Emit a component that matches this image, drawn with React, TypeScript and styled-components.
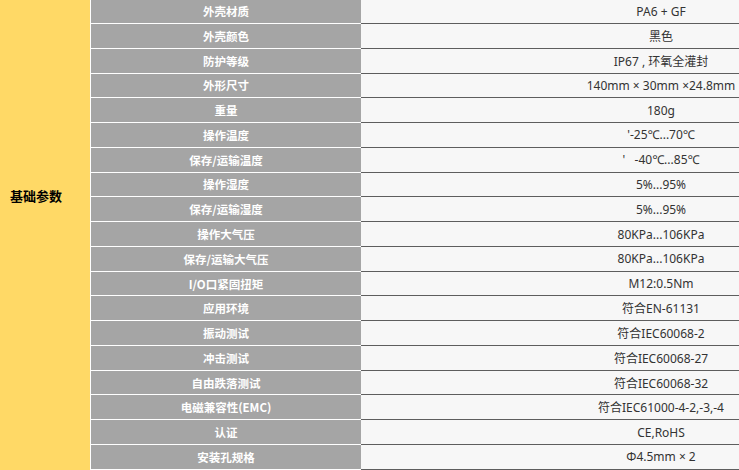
import React, { ReactElement } from "react";
import styled, { createGlobalStyle } from "styled-components";

const GlobalStyle = createGlobalStyle`
  html, body {
    margin: 0;
    padding: 0;
    background-color: #ffffff;
    overflow: hidden;
  }
`;

const color = {
  yellow: "#ffd966",
  gray: "#a5a5a5",
  cell: "#f7f7f7",
  line: "#5e5e5e",
  text: "#333333",
};

const Wrapper = styled.div`
  display: flex;
  width: 961px;
  margin-top: -1.78px;

  font-family: "Noto Sans CJK SC", "Noto Sans", sans-serif;
`;

const GroupCell = styled.div`
  width: 91px;
  flex-shrink: 0;
  box-sizing: border-box;
  padding: 188px 0 0 10px;

  border-right: 1px solid #ffffff;
  background-color: ${color.yellow};

  color: #000000;
  font-size: 13px;
  font-weight: 700;
  line-height: 20px;
`;

const Rows = styled.div`
  display: flex;
  flex-direction: column;
  flex: 1;
`;

const Row = styled.div`
  display: grid;
  grid-template-columns: 270px 1fr;
  height: 24.78px;
`;

const Label = styled.div`
  display: flex;
  align-items: center;
  justify-content: center;

  box-sizing: border-box;
  border-top: 1px solid #ffffff;
  background-color: ${color.gray};

  color: #ffffff;
  font-size: 11.5px;
  font-weight: 700;
  white-space: nowrap;
`;

const Value = styled.div`
  display: flex;
  align-items: center;
  justify-content: center;

  box-sizing: border-box;
  border-top: 1px solid ${color.line};
  background-color: ${color.cell};

  color: ${color.text};
  font-family: "Noto Sans", "Noto Sans CJK SC", sans-serif;
  font-size: 12px;
  white-space: pre;
`;

const specs: [string, string][] = [
  ["外壳材质", "PA6 + GF"],
  ["外壳颜色", "黑色"],
  ["防护等级", "IP67 , 环氧全灌封"],
  ["外形尺寸", "140mm × 30mm ×24.8mm"],
  ["重量", "180g"],
  ["操作温度", "'-25℃...70℃"],
  ["保存/运输温度", "'   -40℃...85℃"],
  ["操作湿度", "5%...95%"],
  ["保存/运输湿度", "5%...95%"],
  ["操作大气压", "80KPa...106KPa"],
  ["保存/运输大气压", "80KPa...106KPa"],
  ["I/O口紧固扭矩", "M12:0.5Nm"],
  ["应用环境", "符合EN-61131"],
  ["振动测试", "符合IEC60068-2"],
  ["冲击测试", "符合IEC60068-27"],
  ["自由跌落测试", "符合IEC60068-32"],
  ["电磁兼容性(EMC)", "符合IEC61000-4-2,-3,-4"],
  ["认证", "CE,RoHS"],
  ["安装孔规格", "Φ4.5mm × 2"],
  ["", ""],
];

const App = (): ReactElement => {
  return (
    <>
      <GlobalStyle />
      <Wrapper>
        <GroupCell>基础参数</GroupCell>
        <Rows>
          {specs.map(([label, value], i) => (
            <Row key={i}>
              <Label>{label}</Label>
              <Value>{value}</Value>
            </Row>
          ))}
        </Rows>
      </Wrapper>
    </>
  );
};

export default App;
